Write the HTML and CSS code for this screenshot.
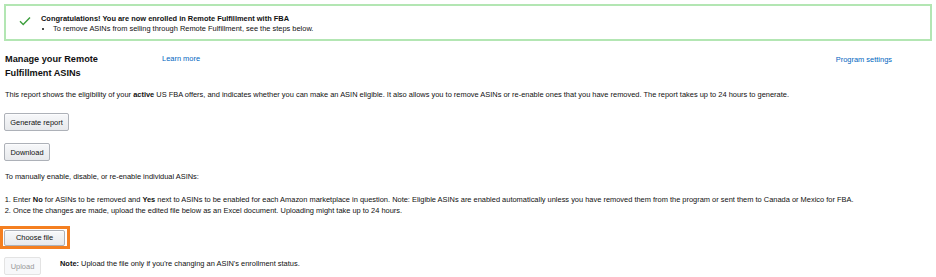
FILE: index.html
```html
<!DOCTYPE html>
<html>
<head>
<meta charset="utf-8">
<link rel="stylesheet" href="styles.css">
</head>
<body>
<div class="alert">
  <svg class="check" width="12" height="10" viewBox="0 0 12 10"><path d="M1 5.2 L4.2 8.4 L11 1.4" fill="none" stroke="#3c9e3c" stroke-width="1.4"/></svg>
  <div class="alert-body">
    <div class="alert-title">Congratulations! You are now enrolled in Remote Fulfillment with FBA</div>
    <ul class="alert-list"><li>To remove ASINs from selling through Remote Fulfillment, see the steps below.</li></ul>
  </div>
</div>
<div class="header">
  <h1 class="title">Manage your Remote<br>Fulfillment ASINs</h1>
  <a class="link learn">Learn more</a>
  <a class="link settings">Program settings</a>
</div>
<p class="intro">This report shows the eligibility of your <b>active</b> US FBA offers, and indicates whether you can make an ASIN eligible. It also allows you to remove ASINs or re-enable ones that you have removed. The report takes up to 24 hours to generate.</p>
<div class="btn-row"><button class="btn btn-gen">Generate report</button></div>
<div class="btn-row"><button class="btn btn-dl">Download</button></div>
<p class="manual">To manually enable, disable, or re-enable individual ASINs:</p>
<ol class="steps">
  <li>Enter <b>No</b> for ASINs to be removed and <b>Yes</b> next to ASINs to be enabled for each Amazon marketplace in question. Note: Eligible ASINs are enabled automatically unless you have removed them from the program or sent them to Canada or Mexico for FBA.</li>
  <li>Once the changes are made, upload the edited file below as an Excel document. Uploading might take up to 24 hours.</li>
</ol>
<div class="choose-wrap"><button class="btn btn-choose">Choose file</button></div>
<div class="upload-row">
  <button class="btn btn-upload" disabled>Upload</button>
  <p class="note"><b>Note:</b> Upload the file only if you're changing an ASIN's enrollment status.</p>
</div>
</body>
</html>
```
FILE: styles.css
```css
* { box-sizing: border-box; }
html, body { margin: 0; padding: 0; background: #fff; }
body {
  font-family: "Liberation Sans", Arial, sans-serif;
  font-size: 7.45px;
  color: #111;
  width: 936px;
  height: 277px;
  overflow: hidden;
}
.alert {
  margin: 4px 4px 0 4px;
  height: 37px;
  border: 2px solid #b3e6b3;
  display: flex;
  align-items: flex-start;
  padding: 8px 0 0 13px;
}
.check { margin-top: 2px; margin-right: 10px; }
.alert-title { font-weight: bold; line-height: 10px; }
.alert-list { margin: 0; padding: 0 0 0 12px; line-height: 10px; }
.alert-list li { list-style: disc; }
.header {
  display: flex;
  align-items: flex-start;
  padding: 11px 0 0 5px;
  height: 49px;
}
.title {
  margin: 0;
  font-size: 9.2px;
  line-height: 14px;
  font-weight: bold;
  width: 157px;
}
.link { color: #0066c0; text-decoration: none; line-height: 10px; }
.learn { margin-top: 2px; }
.settings { margin-left: auto; margin-right: 44px; margin-top: 3px; }
.intro { margin: 0; padding-left: 5px; line-height: 10px; }
.btn {
  font-family: inherit;
  font-size: 7.45px;
  color: #111;
  background: linear-gradient(#f7f8fa, #e7e9ec);
  border: 1px solid #adb1b8;
  border-radius: 2px;
  height: 18px;
  padding: 0 4px;
  white-space: nowrap;
  box-shadow: 0 1px 0 rgba(255,255,255,.6) inset;
}
.btn-row { padding-left: 4px; display: flex; }
.btn-gen { margin-top: 13px; width: 65px; }
.btn-dl { margin-top: 12px; width: 46px; }
.manual { margin: 11px 0 0 5px; line-height: 10px; }
.steps { margin: 12px 0 0 0; padding-left: 13px; line-height: 11px; }
.choose-wrap {
  margin-top: 10px;
  width: 70px;
  height: 23px;
  border: 3px solid #f47f20;
  display: flex;
  align-items: center;
  padding-left: 1px;
}
.btn-choose { width: 61px; height: 16px; }
.upload-row { display: flex; align-items: flex-start; padding-left: 4px; margin-top: 8px; }
.btn-upload { width: 37px; color: #999; background: #f7f8fa; border-color: #e3e3e3; box-shadow: none; }
.note { margin: 2px 0 0 19px; line-height: 10px; }
```
